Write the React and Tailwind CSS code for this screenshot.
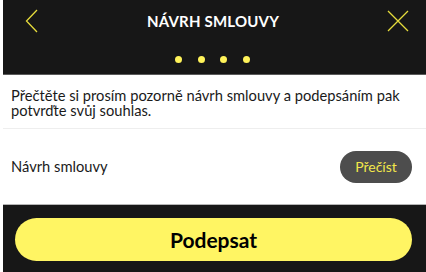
export default function App() {
  return (
    <div className="w-[426px] h-[272px] bg-white pl-[3px] flex flex-col overflow-hidden" style={{ fontFamily: 'Lato, "Noto Sans", sans-serif' }}>
      {/* Header */}
      <header className="h-[75px] bg-[#171717] border-b border-[#5a5a5a] flex flex-col shrink-0">
        <div className="h-[42px] flex items-center justify-between pl-[22px] pr-[17px]">
          <svg width="14" height="24" viewBox="0 0 14 24" fill="none" stroke="#e6dc3c" strokeWidth="1.3">
            <path d="M12 1 L1.5 12 L12 23" />
          </svg>
          <h1 className="text-white font-bold text-[15px] tracking-[0.2px]">NÁVRH SMLOUVY</h1>
          <svg width="22" height="22" viewBox="0 0 22 22" fill="none" stroke="#e6dc3c" strokeWidth="1.3">
            <path d="M1 1 L21 21 M21 1 L1 21" />
          </svg>
        </div>
        <div className="flex-1 flex items-center justify-center gap-[15.5px] pt-[2px] pr-[4px]">
          <span className="w-[7px] h-[7px] rounded-full bg-[#fff35a]" />
          <span className="w-[7px] h-[7px] rounded-full bg-[#fff35a]" />
          <span className="w-[7px] h-[7px] rounded-full bg-[#fff35a]" />
          <span className="w-[7px] h-[7px] rounded-full bg-[#fff35a]" />
        </div>
      </header>

      {/* Intro */}
      <div className="px-[8px] pt-[13px] pb-[10px] border-b border-[#eeeeee] text-[14.7px] leading-[15px] text-[#1a1a1a]">
        Přečtěte si prosím pozorně návrh smlouvy a podepsáním pak potvrďte svůj souhlas.
      </div>

      {/* Row */}
      <div className="flex items-center justify-between pl-[8px] pr-[14px] h-[75px] text-[14.7px] text-[#1a1a1a]">
        <span>Návrh smlouvy</span>
        <button className="w-[72px] h-[32px] rounded-full bg-[#4d4d4d] text-[#f3e84a] text-[14px]">Přečíst</button>
      </div>

      {/* Footer */}
      <footer className="flex-1 bg-[#171717] border-t border-[#b5b5b5] pl-[12px] pr-[14px] pt-[13px]">
        <button className="w-full h-[43px] rounded-full bg-[#fff563] text-black font-bold text-[21px]">
          Podepsat
        </button>
      </footer>
    </div>
  )
}
